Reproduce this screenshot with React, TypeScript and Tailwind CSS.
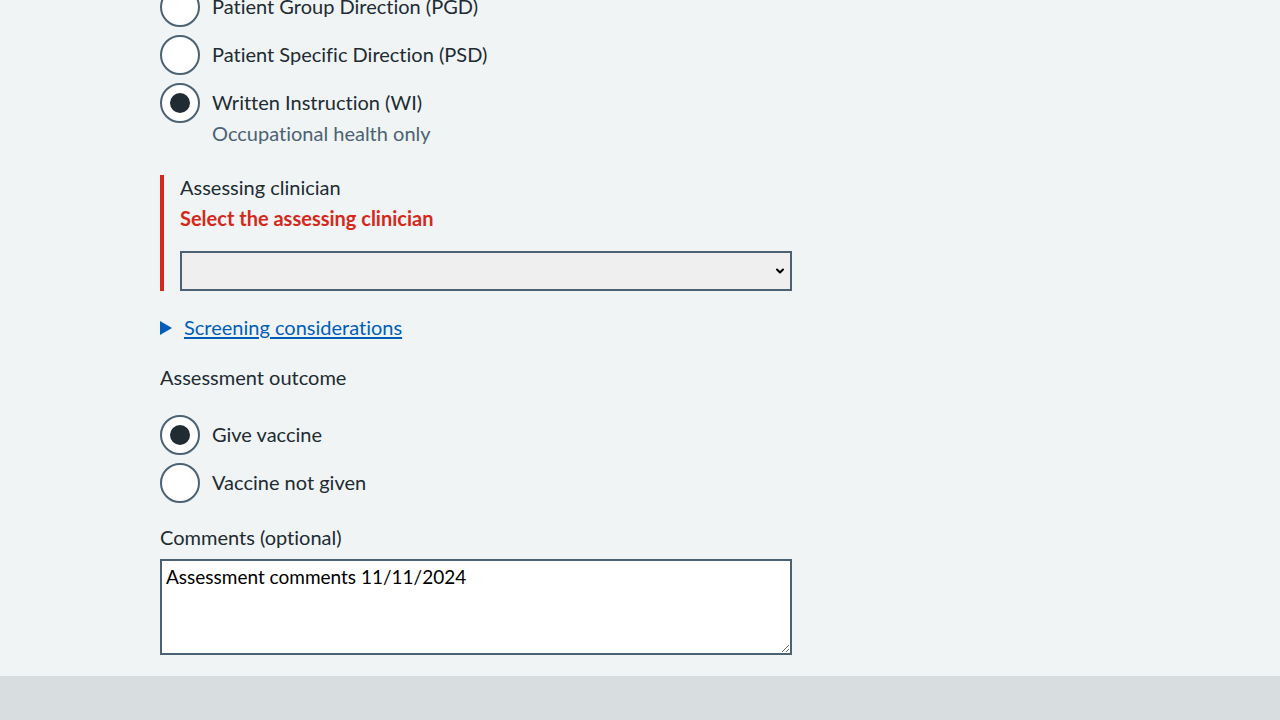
import { ChevronDown } from "lucide-react";

type RadioProps = {
	label: string;
	checked?: boolean;
	hint?: string;
	last?: boolean;
};

function Radio({ label, checked, hint, last }: RadioProps) {
	return (
		<div className={"flex gap-3 " + (last ? "" : "mb-2")}>
			<span className="w-10 h-10 shrink-0 rounded-full border-2 border-[#4c6272] bg-white grid place-items-center">
				{checked && <span className="w-5 h-5 rounded-full bg-[#212b32]" />}
			</span>
			<div className="flex flex-col">
				<span className="pt-[5px] leading-[28px] text-[#212b32]">{label}</span>
				{hint && (
					<span className="leading-[28px] mt-[3px] text-[#4c6272]">{hint}</span>
				)}
			</div>
		</div>
	);
}

function App() {
	return (
		<div
			className="min-h-screen flex flex-col bg-[#f0f4f5] text-[20px] text-[#212b32] overflow-hidden [font-variant-ligatures:none]"
			style={{ fontFamily: "Lato, 'Noto Sans', sans-serif" }}
		>
			<div className="w-[960px] mx-auto flex gap-6 h-[676px]">
				<div className="w-[632px] mt-[-13px]">
					<Radio label="Patient Group Direction (PGD)" />
					<Radio label="Patient Specific Direction (PSD)" />
					<Radio
						label="Written Instruction (WI)"
						checked
						hint="Occupational health only"
						last
					/>

					<div className="mt-[28px] border-l-4 border-[#d5281b] pl-4">
						<p className="leading-[24px]">Assessing clinician</p>
						<p className="leading-[28px] mt-[5px] font-bold text-[#d5281b]">
							Select the assessing clinician
						</p>
						<div className="relative mt-[19px]">
							<select className="w-full h-10 border-2 border-[#4c6272] bg-[#efefef] appearance-none px-1">
								<option></option>
							</select>
							<ChevronDown
								className="absolute right-[6px] top-[14px] text-black"
								size={12}
								strokeWidth={4}
							/>
						</div>
					</div>

					<div className="mt-[22px] flex items-center gap-3 h-[28px]">
						<svg width="12" height="14" viewBox="0 0 12 14" className="mt-[2px]">
							<polygon points="0,0 12,7 0,14" fill="#005eb8" />
						</svg>
						<a href="#" className="text-[#005eb8] underline underline-offset-[2px]">
							Screening considerations
						</a>
					</div>

					<p className="mt-[22px] leading-[28px]">Assessment outcome</p>

					<div className="mt-[24px]">
						<Radio label="Give vaccine" checked />
						<Radio label="Vaccine not given" last />
					</div>

					<p className="mt-[20px] leading-[28px]">Comments (optional)</p>
					<textarea
						className="mt-[8px] block w-full h-[96px] border-2 border-[#4c6272] bg-white text-black text-[19px] px-1 py-[2px] leading-[28px]"
						defaultValue="Assessment comments 11/11/2024"
					/>
				</div>
				<div className="w-[304px]">
					<div className="h-[5px] mt-[-10px] box-content border border-[#d8dde0] bg-white" />
				</div>
			</div>
			<div className="flex-1 bg-[#d8dde0]" />
		</div>
	);
}

export default App;
